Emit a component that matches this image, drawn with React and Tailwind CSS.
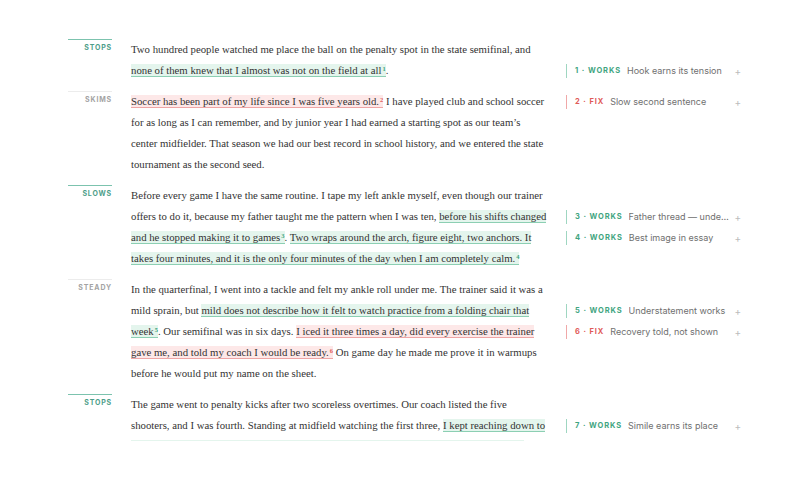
import React from 'react';

const serif = { fontFamily: '"Liberation Serif", "Times New Roman", serif' };

function Hl({ kind, n, children }) {
  const cls = kind === 'fix'
    ? 'bg-[#fde8e8] border-b border-[#eea5a5]'
    : 'bg-[#e4f5ed] border-b border-[#8ccfb3]';
  const sup = kind === 'fix' ? 'text-[#e0605e]' : 'text-[#3fa57f]';
  return (
    <span className={cls}>
      {children}
      <sup className={`${sup} text-[6.5px] ml-[1px] font-bold`}>{n}</sup>
    </span>
  );
}

function Note({ n, kind, text }) {
  const fix = kind === 'fix';
  return (
    <div className="h-[21px] flex items-center">
      <div className={`h-[14px] w-[175px] flex items-center border-l pl-2 ${fix ? 'border-[#f0a8a8]' : 'border-[#9fd6c1]'}`}>
        <span className={`text-[7.5px] font-bold tracking-[0.12em] whitespace-nowrap ${fix ? 'text-[#df5b58]' : 'text-[#3fa57f]'}`}>
          {n} · {fix ? 'FIX' : 'WORKS'}
        </span>
        <span className="ml-[6px] flex-1 min-w-0 truncate text-[9px] text-[#6f6f6f]">{text}</span>
        <span className="ml-[5px] text-[10px] text-[#bcbcbc] leading-none">+</span>
      </div>
    </div>
  );
}

function Para({ label, accent, skip = 0, notes = [], children }) {
  return (
    <div className="flex">
      <div className={`w-[44px] border-t pt-[3px] text-right ${accent ? 'border-[#7cc3ae]' : 'border-[#ececec]'}`}>
        <div className={`text-[7px] leading-[10px] font-bold tracking-[0.12em] ${accent ? 'text-[#4d9e89]' : 'text-[#a3a3a3]'}`}>{label}</div>
      </div>
      <div className="w-[418px] ml-[19px] text-[10.75px] leading-[21px] text-[#333]" style={serif}>
        {children}
      </div>
      <div className="ml-[17px]" style={{ paddingTop: skip * 21 }}>
        {notes.map(x => <Note key={x.n} {...x} />)}
      </div>
    </div>
  );
}

export default function App() {
  return (
    <div className="w-[800px] h-[479px] bg-white" style={{ fontFamily: 'Inter, "Noto Sans", sans-serif' }}>
      <div className="h-[441px] overflow-hidden pt-[39px] pl-[68px] flex flex-col gap-[10px]">
        <Para label="STOPS" accent skip={1} notes={[{ n: 1, kind: 'works', text: 'Hook earns its tension' }]}>
          Two hundred people watched me place the ball on the penalty spot in the state semifinal, and{' '}
          <Hl kind="works" n="1">none of them knew that I almost was not on the field at all</Hl>.
        </Para>
        <Para label="SKIMS" notes={[{ n: 2, kind: 'fix', text: 'Slow second sentence' }]}>
          <Hl kind="fix" n="2">Soccer has been part of my life since I was five years old.</Hl> I have played club and school soccer
          for as long as I can remember, and by junior year I had earned a starting spot as our team’s center midfielder. That
          season we had our best record in school history, and we entered the state tournament as the second seed.
        </Para>
        <Para label="SLOWS" accent skip={1} notes={[
          { n: 3, kind: 'works', text: 'Father thread — underused in the ending' },
          { n: 4, kind: 'works', text: 'Best image in essay' },
        ]}>
          Before every game I have the same routine. I tape my left ankle myself, even though our trainer offers to do it,
          because my father taught me the pattern when I was ten,{' '}
          <Hl kind="works" n="3">before his shifts changed and he stopped making it to games</Hl>.{' '}
          <Hl kind="works" n="4">Two wraps around the arch, figure eight, two anchors. It takes four minutes, and it is the only four minutes of the day when I am completely calm.</Hl>
        </Para>
        <Para label="STEADY" skip={1} notes={[
          { n: 5, kind: 'works', text: 'Understatement works' },
          { n: 6, kind: 'fix', text: 'Recovery told, not shown' },
        ]}>
          In the quarterfinal, I went into a tackle and felt my ankle roll under me. The trainer said it was a mild sprain,
          but <Hl kind="works" n="5">mild does not describe how it felt to watch practice from a folding chair that week</Hl>.
          Our semifinal was in six days.{' '}
          <Hl kind="fix" n="6">I iced it three times a day, did every exercise the trainer gave me, and told my coach I would be ready.</Hl>{' '}
          On game day he made me prove it in warmups before he would put my name on the sheet.
        </Para>
        <Para label="STOPS" accent skip={1} notes={[{ n: 7, kind: 'works', text: 'Simile earns its place' }]}>
          The game went to penalty kicks after two scoreless overtimes. Our coach listed the five<br />
          shooters, and I was fourth. Standing at midfield watching the first three,{' '}
          <Hl kind="works" n="7">I kept reaching down to touch the tape through my sock, the way you check a pocket for keys you already know are there</Hl>.
          When my name was called, I walked to the spot and set the ball down.
        </Para>
      </div>
    </div>
  );
}
